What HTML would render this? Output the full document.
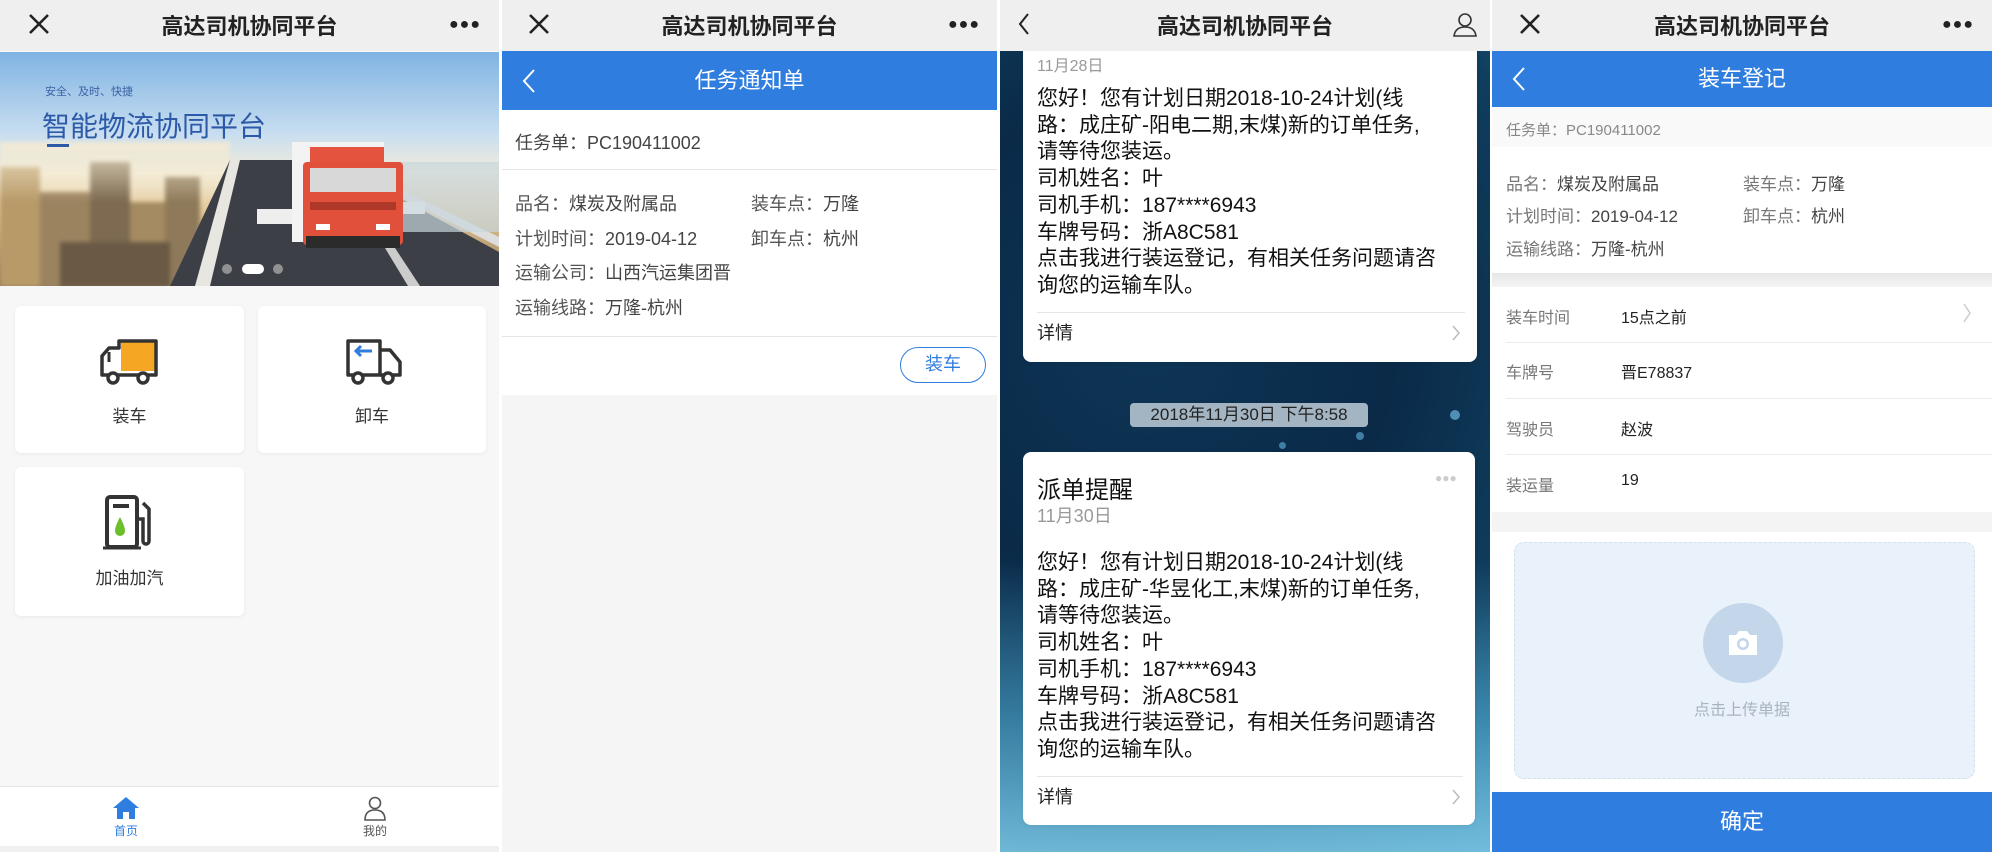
<!DOCTYPE html>
<html><head><meta charset="utf-8">
<style>
*{margin:0;padding:0;box-sizing:border-box}
body{width:1992px;height:852px;overflow:hidden;background:#fff;font-family:"Liberation Sans","Noto Sans CJK SC",sans-serif;position:relative;color:#333}
.p{position:absolute;top:0;height:852px;overflow:hidden}
.a{position:absolute;white-space:nowrap}
.hdr{position:absolute;left:0;top:0;width:100%;height:51px;background:#efefef;z-index:5}
.ttl{position:absolute;top:0;left:0;width:100%;text-align:center;line-height:54px;font-size:22px;font-weight:bold;color:#222}
.x{position:absolute;top:13px;width:22px;height:22px}
.dots{position:absolute;top:20px;font-size:16px;font-weight:bold;color:#222;letter-spacing:1px;line-height:10px}
.blue{position:absolute;left:0;width:100%;background:#2f7ddf;color:#fff;text-align:center;font-size:22px}
.card{position:absolute;background:#fff;border-radius:6px;box-shadow:0 1px 4px rgba(0,0,0,.06)}
.lab{color:#555}
.t{font-size:18px;color:#444}
.city div{position:absolute}
</style></head><body>

<!-- Panel 1 -->
<div class="p" style="left:0;width:499px;background:#f7f7f7">
  <div class="hdr">
    <svg class="x" style="left:28px" viewBox="0 0 22 22"><path d="M2 2L20 20M20 2L2 20" stroke="#222" stroke-width="2.6"/></svg>
    <div class="ttl">高达司机协同平台</div>
    <div class="dots" style="left:449px">●●●</div>
  </div>
  <div class="a" style="left:0;top:52px;width:499px;height:234px;overflow:hidden;background:linear-gradient(180deg,#7fb3e3 0%,#c8def0 35%,#f3ecd8 52%,#e2c48f 70%,#8a7658 100%)">
    <div class="city" style="position:absolute;left:0;top:0;width:499px;height:234px;filter:blur(2px)">
      <div style="left:0;top:115px;width:40px;height:120px;background:#b89a68"></div>
      <div style="left:40px;top:140px;width:50px;height:95px;background:#9c8360"></div>
      <div style="left:90px;top:110px;width:40px;height:125px;background:#7d6a50"></div>
      <div style="left:130px;top:150px;width:40px;height:85px;background:#a58b61"></div>
      <div style="left:165px;top:125px;width:35px;height:110px;background:#8e7a5a"></div>
      <div style="left:60px;top:190px;width:110px;height:45px;background:#6a5a45"></div>
      <div style="left:0;top:90px;width:230px;height:60px;background:linear-gradient(180deg,rgba(245,235,210,.9),rgba(245,235,210,0))"></div>
    </div>
    <svg class="a" style="left:0;top:0" width="499" height="234">
      <polygon points="230,108 330,108 499,200 499,234 170,234" fill="#3c3f45"/>
      <polygon points="230,108 240,108 210,234 195,234" fill="#e8e6e0"/>
      <polygon points="330,108 340,108 499,185 499,195" fill="#ddd"/>
      <polygon points="385,196 395,196 420,234 408,234" fill="#ccc"/>
      <rect x="257" y="157" width="40" height="15" fill="#eee"/>
      <rect x="395" y="150" width="30" height="12" fill="#eee"/>
      <rect x="400" y="110" width="99" height="70" fill="#c8d6dd" opacity=".7"/>
      <rect x="292" y="90" width="92" height="100" fill="#f3f3f3"/>
      <rect x="310" y="95" width="74" height="20" fill="#e4533e"/>
      <rect x="303" y="110" width="100" height="83" rx="4" fill="#e0503a"/>
      <rect x="310" y="116" width="86" height="24" fill="#d8d8d8"/>
      <rect x="310" y="150" width="86" height="8" fill="#b03828"/>
      <rect x="316" y="172" width="14" height="6" fill="#fff"/>
      <rect x="376" y="172" width="14" height="6" fill="#fff"/>
      <rect x="306" y="184" width="94" height="12" fill="#2b2b2b"/>
    </svg>
    <div class="a" style="left:45px;top:31px;font-size:11px;color:#3a62a5">安全、及时、快捷</div>
    <div class="a" style="left:42px;top:53px;font-size:28px;color:#2c5aa8">智能物流协同平台</div>
    <div class="a" style="left:47px;top:92px;width:22px;height:3px;background:#2c5aa8"></div>
    <div class="a" style="left:222px;top:212px;width:10px;height:10px;border-radius:50%;background:rgba(200,200,200,.6)"></div>
    <div class="a" style="left:242px;top:212px;width:22px;height:10px;border-radius:5px;background:#fff"></div>
    <div class="a" style="left:273px;top:212px;width:10px;height:10px;border-radius:50%;background:rgba(200,200,200,.6)"></div>
  </div>
  <div class="card" style="left:15px;top:306px;width:229px;height:147px">
    <svg class="a" style="left:84px;top:32px" width="62" height="48" viewBox="0 0 62 48"><rect x="22" y="3" width="34" height="30" fill="#f5a623"/><path d="M20 3H57V37H3V18L10 10H20Z" fill="none" stroke="#333" stroke-width="3.5" stroke-linejoin="round"/><path d="M10 14V24" stroke="#333" stroke-width="3"/><circle cx="14" cy="40" r="5" fill="#fff" stroke="#333" stroke-width="3.5"/><circle cx="44" cy="40" r="5" fill="#fff" stroke="#333" stroke-width="3.5"/></svg>
    <div class="a" style="left:0;width:229px;text-align:center;top:96px;font-size:17px;color:#333">装车</div>
  </div>
  <div class="card" style="left:258px;top:306px;width:228px;height:147px">
    <svg class="a" style="left:86px;top:32px" width="60" height="48" viewBox="0 0 60 48"><path d="M4 3H36V37H4Z" fill="none" stroke="#333" stroke-width="3.5" stroke-linejoin="round"/><path d="M36 12H46L56 24V37H36" fill="none" stroke="#333" stroke-width="3.5" stroke-linejoin="round"/><path d="M28 13H12M17 8L12 13L17 18" fill="none" stroke="#2f7ddf" stroke-width="3"/><circle cx="14" cy="40" r="5" fill="#fff" stroke="#333" stroke-width="3.5"/><circle cx="44" cy="40" r="5" fill="#fff" stroke="#333" stroke-width="3.5"/></svg>
    <div class="a" style="left:0;width:228px;text-align:center;top:96px;font-size:17px;color:#333">卸车</div>
  </div>
  <div class="card" style="left:15px;top:467px;width:229px;height:149px">
    <svg class="a" style="left:86px;top:28px" width="60" height="56" viewBox="0 0 60 56"><rect x="6" y="2" width="30" height="50" rx="3" fill="none" stroke="#333" stroke-width="4"/><rect x="12" y="9" width="16" height="4" fill="#333"/><path d="M19 22C15 30 14 33 14 36A5 5 0 0 0 24 36C24 33 23 30 19 22Z" fill="#6cbf2a"/><path d="M36 24H42V46A3 3 0 0 0 48 46V14L42 8" fill="none" stroke="#333" stroke-width="3.5"/><path d="M2 53H40" stroke="#333" stroke-width="3"/></svg>
    <div class="a" style="left:0;width:229px;text-align:center;top:97px;font-size:17px;color:#333">加油加汽</div>
  </div>
  <div class="a" style="left:0;top:786px;width:499px;height:60px;background:#fff;border-top:1px solid #e6e6e6"></div>
  <div class="a" style="left:0;top:846px;width:499px;height:6px;background:#f0f0f0"></div>
  <svg class="a" style="left:112px;top:796px" width="28" height="24" viewBox="0 0 28 24"><path d="M14 1L27 12H23V23H17V16H11V23H5V12H1Z" fill="#2f7ddf"/></svg>
  <div class="a" style="left:100px;width:52px;text-align:center;top:822px;font-size:12px;color:#2f7ddf">首页</div>
  <svg class="a" style="left:362px;top:796px" width="26" height="26" viewBox="0 0 26 26"><circle cx="13" cy="7" r="5.5" fill="none" stroke="#555" stroke-width="1.6"/><path d="M3 24C3 16 8 14 13 14S23 16 23 24Z" fill="none" stroke="#555" stroke-width="1.6"/></svg>
  <div class="a" style="left:349px;width:52px;text-align:center;top:822px;font-size:12px;color:#555">我的</div>
</div>

<!-- Panel 2 -->
<div class="p" style="left:502px;width:495px;background:#f5f5f5">
  <div class="hdr">
    <svg class="x" style="left:26px" viewBox="0 0 22 22"><path d="M2 2L20 20M20 2L2 20" stroke="#222" stroke-width="2.6"/></svg>
    <div class="ttl">高达司机协同平台</div>
    <div class="dots" style="left:446px">●●●</div>
  </div>
  <div class="blue" style="top:51px;height:59px;line-height:59px">任务通知单</div>
  <svg class="a" style="left:20px;top:68px" width="14" height="26" viewBox="0 0 14 26"><path d="M12 2L2 13L12 24" fill="none" stroke="#fff" stroke-width="2"/></svg>
  <div class="a" style="left:0;top:110px;width:495px;height:285px;background:#fff"></div>
  <div class="a t" style="left:13px;top:129px">任务单：PC190411002</div>
  <div class="a" style="left:0;top:169px;width:495px;height:1px;background:#e5e5e5"></div>
  <div class="a t" style="left:13px;top:190px"><span class="lab">品名：</span>煤炭及附属品</div>
  <div class="a t" style="left:249px;top:190px"><span class="lab">装车点：</span>万隆</div>
  <div class="a t" style="left:13px;top:225px"><span class="lab">计划时间：</span>2019-04-12</div>
  <div class="a t" style="left:249px;top:225px"><span class="lab">卸车点：</span>杭州</div>
  <div class="a t" style="left:13px;top:259px"><span class="lab">运输公司：</span>山西汽运集团晋</div>
  <div class="a t" style="left:13px;top:294px"><span class="lab">运输线路：</span>万隆-杭州</div>
  <div class="a" style="left:0;top:336px;width:495px;height:1px;background:#e5e5e5"></div>
  <div class="a" style="left:398px;top:347px;width:86px;height:36px;border:1.5px solid #2f7ddf;border-radius:18px;color:#2f7ddf;font-size:18px;text-align:center;line-height:33px">装车</div>
</div>

<!-- Panel 3 -->
<div class="p" style="left:1000px;width:490px;background:radial-gradient(circle at 30% 40%,#0e3556 0%,#0a2a48 40%,#103e5e 70%,#2c7aa0 100%)">
  <div class="a" style="left:0;top:560px;width:490px;height:292px;background:linear-gradient(180deg,rgba(40,120,160,0) 0%,rgba(80,170,210,.6) 55%,rgba(130,205,235,.8) 100%)"></div>
  <div class="a" style="left:450px;top:410px;width:10px;height:10px;border-radius:50%;background:#4f8fb4"></div>
  <div class="a" style="left:356px;top:432px;width:8px;height:8px;border-radius:50%;background:#3f7fa4"></div>
  <div class="a" style="left:279px;top:442px;width:7px;height:7px;border-radius:50%;background:#3f7fa4"></div>
  <div class="hdr">
    <svg class="a" style="left:18px;top:12px" width="12" height="24" viewBox="0 0 12 24"><path d="M10 2L2 12L10 22" fill="none" stroke="#222" stroke-width="2"/></svg>
    <div class="ttl">高达司机协同平台</div>
    <svg class="a" style="left:452px;top:12px" width="26" height="26" viewBox="0 0 26 26"><circle cx="13" cy="8" r="6" fill="none" stroke="#333" stroke-width="1.6"/><path d="M2 24C3 17 8 15 13 15S23 17 24 24Z" fill="none" stroke="#333" stroke-width="1.6"/></svg>
  </div>
  <div class="card" style="left:23px;top:20px;width:454px;height:342px;border-radius:8px">
    <div class="a" style="left:14px;top:32px;font-size:16px;color:#999">11月28日</div>
    <div class="a" style="left:14px;top:66px;font-size:21px;line-height:26.7px;color:#111;white-space:normal;width:420px">您好！您有计划日期2018-10-24计划(线<br>路：成庄矿-阳电二期,末煤)新的订单任务,<br>请等待您装运。<br>司机姓名：叶<br>司机手机：187****6943<br>车牌号码：浙A8C581<br>点击我进行装运登记，有相关任务问题请咨<br>询您的运输车队。</div>
    <div class="a" style="left:14px;top:292px;width:428px;height:1px;background:#e5e5e5"></div>
    <div class="a" style="left:14px;top:300px;font-size:18px;line-height:26px;color:#222">详情</div>
    <svg class="a" style="left:428px;top:304px" width="10" height="18" viewBox="0 0 10 18"><path d="M2 2L8 9L2 16" fill="none" stroke="#bbb" stroke-width="1.5"/></svg>
  </div>
  <div class="a" style="left:130px;top:403px;width:238px;height:24px;border-radius:4px;background:rgba(190,205,215,.85);color:#222;font-size:17px;text-align:center;line-height:24px">2018年11月30日 下午8:58</div>
  <div class="card" style="left:23px;top:452px;width:452px;height:373px;border-radius:8px">
    <div class="a" style="left:14px;top:18px;font-size:24px;color:#111">派单提醒</div>
    <div class="a" style="left:14px;top:50px;font-size:18px;color:#999">11月30日</div>
    <div class="a" style="left:412px;top:19px;font-size:12px;color:#ccc;letter-spacing:0">●●●</div>
    <div class="a" style="left:14px;top:98px;font-size:21px;line-height:26.7px;color:#111;white-space:normal;width:420px">您好！您有计划日期2018-10-24计划(线<br>路：成庄矿-华昱化工,末煤)新的订单任务,<br>请等待您装运。<br>司机姓名：叶<br>司机手机：187****6943<br>车牌号码：浙A8C581<br>点击我进行装运登记，有相关任务问题请咨<br>询您的运输车队。</div>
    <div class="a" style="left:14px;top:324px;width:426px;height:1px;background:#e5e5e5"></div>
    <div class="a" style="left:14px;top:332px;font-size:18px;line-height:26px;color:#222">详情</div>
    <svg class="a" style="left:428px;top:336px" width="10" height="18" viewBox="0 0 10 18"><path d="M2 2L8 9L2 16" fill="none" stroke="#bbb" stroke-width="1.5"/></svg>
  </div>
</div>

<!-- Panel 4 -->
<div class="p" style="left:1492px;width:500px;background:#f4f4f4">
  <div class="hdr">
    <svg class="x" style="left:27px" viewBox="0 0 22 22"><path d="M2 2L20 20M20 2L2 20" stroke="#222" stroke-width="2.6"/></svg>
    <div class="ttl">高达司机协同平台</div>
    <div class="dots" style="left:450px">●●●</div>
  </div>
  <div class="blue" style="top:51px;height:56px;line-height:56px">装车登记</div>
  <svg class="a" style="left:20px;top:66px" width="14" height="26" viewBox="0 0 14 26"><path d="M12 2L2 13L12 24" fill="none" stroke="#fff" stroke-width="2"/></svg>
  <div class="a" style="left:0;top:107px;width:500px;height:166px;background:#fff"></div>
  <div class="a" style="left:0;top:107px;width:500px;height:40px;background:#f9f9f9"></div>
  <div class="a" style="left:14px;top:119px;font-size:15px;color:#888">任务单：PC190411002</div>
  <div class="a t" style="left:14px;top:170px;font-size:17px"><span style="color:#777">品名：</span>煤炭及附属品</div>
  <div class="a t" style="left:251px;top:170px;font-size:17px"><span style="color:#777">装车点：</span>万隆</div>
  <div class="a t" style="left:14px;top:202px;font-size:17px"><span style="color:#777">计划时间：</span>2019-04-12</div>
  <div class="a t" style="left:251px;top:202px;font-size:17px"><span style="color:#777">卸车点：</span>杭州</div>
  <div class="a t" style="left:14px;top:235px;font-size:17px"><span style="color:#777">运输线路：</span>万隆-杭州</div>
  <div class="a" style="left:0;top:273px;width:500px;height:14px;background:linear-gradient(#e6e6e6,#f4f4f4)"></div>
  <div class="a" style="left:0;top:287px;width:500px;height:225px;background:#fff"></div>
  <div class="a" style="left:14px;top:304px;font-size:16px;color:#777">装车时间</div><div class="a" style="left:129px;top:304px;font-size:16px;color:#222">15点之前</div>
  <svg class="a" style="left:470px;top:302px" width="10" height="22" viewBox="0 0 10 22"><path d="M2 2L8 11L2 20" fill="none" stroke="#ccc" stroke-width="1.5"/></svg>
  <div class="a" style="left:14px;top:342px;width:486px;height:1px;background:#ebebeb"></div>
  <div class="a" style="left:14px;top:359px;font-size:16px;color:#777">车牌号</div><div class="a" style="left:129px;top:359px;font-size:16px;color:#222">晋E78837</div>
  <div class="a" style="left:14px;top:398px;width:486px;height:1px;background:#ebebeb"></div>
  <div class="a" style="left:14px;top:416px;font-size:16px;color:#777">驾驶员</div><div class="a" style="left:129px;top:416px;font-size:16px;color:#222">赵波</div>
  <div class="a" style="left:14px;top:454px;width:486px;height:1px;background:#ebebeb"></div>
  <div class="a" style="left:14px;top:472px;font-size:16px;color:#777">装运量</div><div class="a" style="left:129px;top:472px;font-size:16px;color:#222">19</div>
  <div class="a" style="left:0;top:512px;width:500px;height:20px;background:#f4f4f4"></div>
  <div class="a" style="left:0;top:532px;width:500px;height:260px;background:#fff"></div>
  <div class="a" style="left:22px;top:542px;width:461px;height:237px;background:#e9f1fb;border:1.5px dashed #d2e0f0;border-radius:10px"></div>
  <div class="a" style="left:211px;top:603px;width:80px;height:80px;border-radius:50%;background:#c4d6ea"></div>
  <svg class="a" style="left:234px;top:629px" width="34" height="28" viewBox="0 0 34 28"><path d="M3 6H10L13 2H21L24 6H31V26H3Z" fill="#fff"/><circle cx="17" cy="15" r="6" fill="#c4d6ea"/><circle cx="17" cy="15" r="3.5" fill="#fff"/></svg>
  <div class="a" style="left:0;width:500px;text-align:center;top:696px;font-size:16px;color:#a9b3bf">点击上传单据</div>
  <div class="a" style="left:0;top:792px;width:500px;height:60px;background:#2f7ddf;color:#fff;font-size:22px;text-align:center;line-height:60px">确定</div>
</div>
</body></html>
